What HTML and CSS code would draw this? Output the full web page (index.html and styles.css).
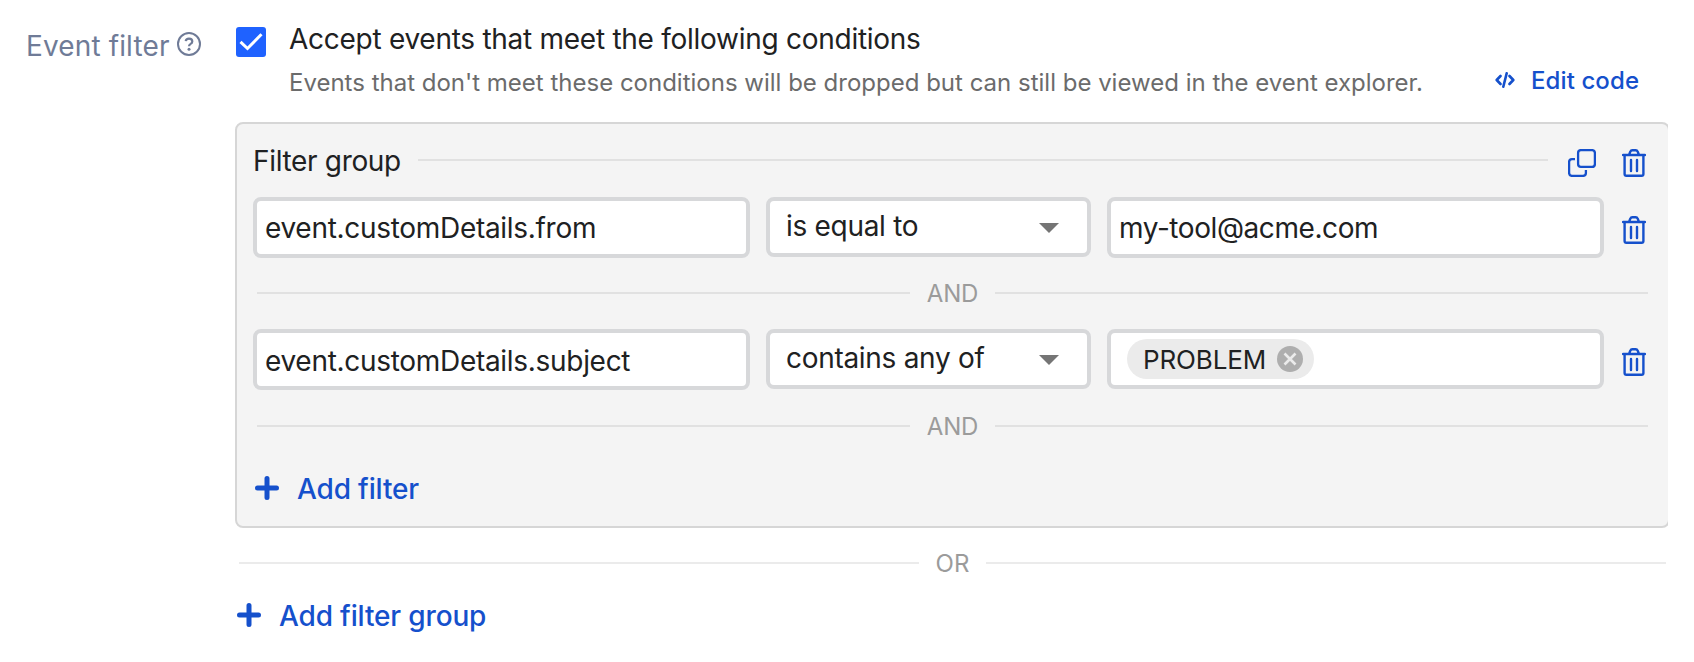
FILE: index.html
```
<!DOCTYPE html>
<html lang="en">
<head>
<meta charset="utf-8">
<title>Event filter</title>
<link rel="stylesheet" href="styles.css">
</head>
<body>
<svg class="defs" width="0" height="0">
  <symbol id="trash" viewBox="0 0 24 28">
    <path d="M1 6H23M7.200 5.500L8.300 2.600Q8.900 1.200 10.300 1.200H13.700Q15.100 1.200 15.700 2.600L16.800 5.500M2.600 6V25Q2.600 26.800 4.400 26.800H19.600Q21.400 26.800 21.400 25V6M9 11V22M15 11V22" fill="none" stroke="currentColor" stroke-width="2.400" stroke-linecap="round"/>
  </symbol>
  <symbol id="plus" viewBox="0 0 24 24">
    <path d="M12 2.500V21.500M2.500 12H21.500" fill="none" stroke="currentColor" stroke-width="5" stroke-linecap="round"/>
  </symbol>
</svg>
<div class="page">
  <div class="label"><span class="t">Event filter</span>
    <svg class="help" viewBox="0 0 24 24"><circle cx="12" cy="12" r="11" fill="none" stroke="currentColor" stroke-width="2"/><path d="M8.700 9.200Q9 6.600 12 6.600Q15.300 6.600 15.300 9.400Q15.300 11 13.600 11.900Q12 12.700 12 14.300" fill="none" stroke="currentColor" stroke-width="2.200"/><circle cx="12" cy="17.300" r="1.500" fill="currentColor"/></svg>
  </div>
  <div class="main">
    <div class="intro">
      <svg class="checkbox" viewBox="0 0 30 30"><rect width="30" height="30" rx="3" fill="#1f62ff"/><path d="M4.500 14.800L11.500 21.500L25.500 7.200" fill="none" stroke="#fff" stroke-width="3"/></svg>
      <div class="copy">
        <div class="title"><span class="t">Accept events that meet the following conditions</span></div>
        <div class="hint"><span class="t">Events that don't meet these conditions will be dropped but can still be viewed in the event explorer.</span></div>
      </div>
      <a class="edit"><svg class="code" viewBox="0 0 20 16"><path d="M5.500 4L1.700 8L5.500 12M14.500 4L18.300 8L14.500 12M11.700 1.300L8.300 14.700" fill="none" stroke="currentColor" stroke-width="2.600" stroke-linecap="round" stroke-linejoin="round"/></svg><span class="t">Edit code</span></a>
    </div>
    <div class="group">
      <div class="head"><span class="t">Filter group</span><i class="rule"></i>
        <svg class="copyicon" viewBox="0 0 28 28"><rect x="10.100" y="1.100" width="16.800" height="16.800" rx="2.800" fill="none" stroke="currentColor" stroke-width="2.300"/><path d="M7 10.100H4Q1.100 10.100 1.100 13V24Q1.100 26.900 4 26.900H15Q17.900 26.900 17.900 24V21" fill="none" stroke="currentColor" stroke-width="2.300"/></svg>
        <svg class="trash"><use href="#trash"/></svg>
      </div>
      <div class="row">
        <div class="field"><span class="t">event.customDetails.from</span></div>
        <div class="select"><span class="t">is equal to</span><i class="caret"></i></div>
        <div class="field"><span class="t address">my-tool@acme.com</span></div>
        <svg class="trash"><use href="#trash"/></svg>
      </div>
      <div class="divider and first"><i class="rule"></i><span class="t">AND</span><i class="rule"></i></div>
      <div class="row">
        <div class="field subject"><span class="t">event.customDetails.subject</span></div>
        <div class="select"><span class="t">contains any of</span><i class="caret"></i></div>
        <div class="field tags"><div class="chip"><span class="t">PROBLEM</span><svg class="remove" viewBox="0 0 26 26"><circle cx="13" cy="13" r="13" fill="#aeaeae"/><path d="M7.500 7.500L18.500 18.500M18.500 7.500L7.500 18.500" stroke="#ebebeb" stroke-width="2.600"/></svg></div></div>
        <svg class="trash"><use href="#trash"/></svg>
      </div>
      <div class="divider and second"><i class="rule"></i><span class="t">AND</span><i class="rule"></i></div>
      <a class="add"><svg class="plus"><use href="#plus"/></svg><span class="t">Add filter</span></a>
    </div>
    <div class="divider or"><i class="rule"></i><span class="t">OR</span><i class="rule"></i></div>
    <a class="add outer"><svg class="plus"><use href="#plus"/></svg><span class="t">Add filter group</span></a>
  </div>
</div>
</body>
</html>
```
FILE: styles.css
```
* { box-sizing: border-box; }
body { margin: 0; background: #fff; color: #202122; font: 400 28px/36px Inter, sans-serif; }
svg { display: block; flex: none; }
.defs { position: absolute; }
.t { white-space: nowrap; }
.page { display: flex; width: 1668px; height: 662px; overflow: hidden; }
.label { display: flex; width: 235px; flex: none; padding: 28px 0 0 26px; color: #6f7b97; letter-spacing: 0.13px; }
.help { width: 24px; height: 24px; margin: 4px 0 0 7.5px; }
.main { width: 1435px; flex: none; }
.intro { display: flex; height: 122px; padding: 21px 0 0 1px; }
.checkbox { width: 30px; height: 30px; margin-top: 6px; }
.copy { width: 1224px; padding-left: 23px; }
.title { letter-spacing: -0.27px; }
.hint { margin-top: 10px; font-size: 24px; line-height: 32px; color: #6b6b6b; }
.edit, .add { color: #1550cc; font-weight: 500; }
.edit { display: flex; margin-top: 44px; padding-left: 5px; font-size: 24px; line-height: 32px; letter-spacing: 0.1px; }
.code { width: 20px; height: 16px; margin: 7px 16px 0 0; }
.group { height: 406px; padding: 19px 20px 0 16px; background: #f4f4f4; border: 2px solid #d6d6d6; border-radius: 8px; }
.head { display: flex; width: 1393px; height: 54px; letter-spacing: -0.33px; }
.rule { flex: 1; height: 2px; background: #e1e1e1; }
.head .rule { margin: 16px 20px 0 17px; }
.trash, .copyicon { color: #1550cc; height: 28px; }
.trash { width: 24px; margin-top: 19px; }
.head svg { margin-top: 6px; }
.copyicon { width: 28px; margin-right: 26px; }
.row { display: grid; grid-template-columns: 497px 325px 497px 24px; column-gap: 16px; height: 61px; }
.row .trash { margin-left: 2px; }
.field, .select { background: #fff; border: 4px solid #d7d8da; border-radius: 8px; letter-spacing: -0.3px; }
.field { padding: 9px 8px 0 8px; height: 61px; }
.field.subject { padding-top: 10px; }
.address { letter-spacing: -0.42px; }
.select { display: flex; justify-content: space-between; height: 60px; padding: 7px 28px 0 16px; }
.caret { width: 20px; height: 10px; margin-top: 15px; background: #757575; clip-path: polygon(0 0, 100% 0, 50% 100%); }
.field.tags { height: 60px; padding: 6px 0 0 16px; }
.chip { display: flex; width: 187px; height: 40px; padding: 7px 11px 0 16px; justify-content: space-between; border-radius: 20px; background: #ebebeb; font-size: 26px; line-height: 26px; letter-spacing: -0.15px; }
.chip .t { margin-top: 1px; }
.remove { width: 26px; height: 26px; }
.divider { display: flex; align-items: center; height: 70px; color: #9b9b9b; font-size: 24px; line-height: 34px; }
.divider .t { padding-top: 2px; }
.and { padding: 0 0 0 4px; width: 1395px; gap: 17px; letter-spacing: -0.2px; }
.first { margin-bottom: 1px; }
.second { height: 72px; }
.or { padding: 0 2px 0 4px; width: 1433px; gap: 17px; }
.or .rule { background: #ebebeb; }
.add { display: flex; padding-left: 2px; letter-spacing: -0.15px; }
.plus { width: 24px; height: 24px; margin: 5px 18px 0 0; }
.group .add { margin-top: 9px; }
```
